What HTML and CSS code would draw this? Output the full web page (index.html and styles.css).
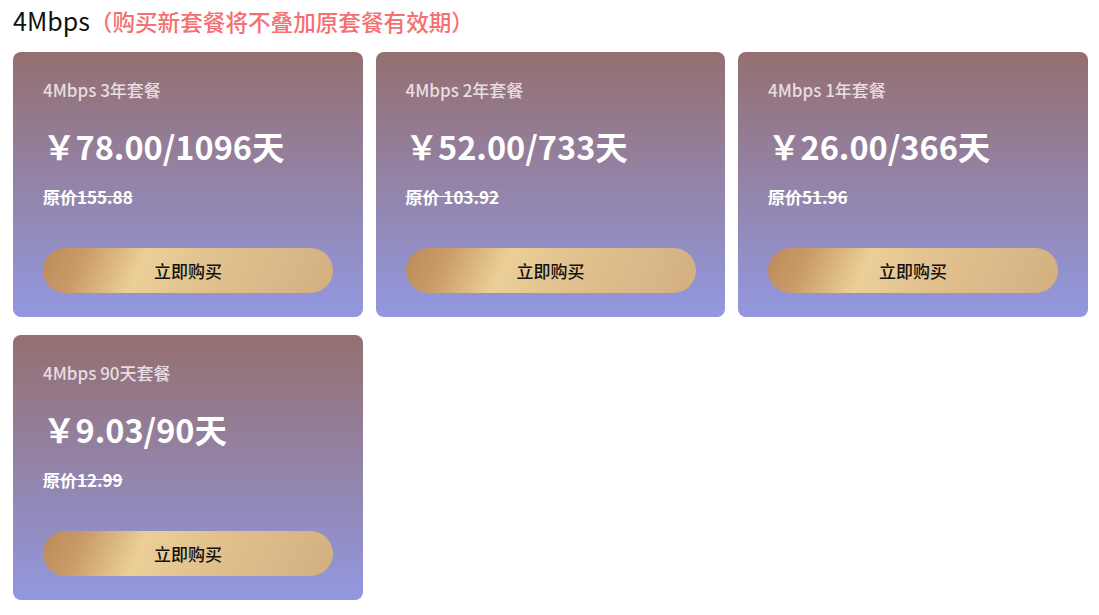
FILE: index.html
```html
<!DOCTYPE html>
<html lang="zh">
<head>
<meta charset="utf-8">
<link rel="stylesheet" href="styles.css">
</head>
<body>
<div class="page">
  <h2 class="title">4Mbps<span class="note">（购买新套餐将不叠加原套餐有效期）</span></h2>
  <div class="grid">
    <div class="card">
      <div class="name">4Mbps 3年套餐</div>
      <div class="price">￥78.00/1096天</div>
      <div class="orig">原价155.88</div>
      <button class="buy">立即购买</button>
    </div>
    <div class="card">
      <div class="name">4Mbps 2年套餐</div>
      <div class="price">￥52.00/733天</div>
      <div class="orig">原价 103.92</div>
      <button class="buy">立即购买</button>
    </div>
    <div class="card">
      <div class="name">4Mbps 1年套餐</div>
      <div class="price">￥26.00/366天</div>
      <div class="orig">原价51.96</div>
      <button class="buy">立即购买</button>
    </div>
    <div class="card">
      <div class="name">4Mbps 90天套餐</div>
      <div class="price">￥9.03/90天</div>
      <div class="orig">原价12.99</div>
      <button class="buy">立即购买</button>
    </div>
  </div>
</div>
</body>
</html>
```
FILE: styles.css
```css
* { box-sizing: border-box; }
html, body { margin: 0; padding: 0; background: #fff; }
body { font-family: "Noto Sans CJK SC", "Noto Sans", sans-serif; }
.page { padding: 5px 13px 0 13px; }
.title {
  margin: 0 0 17px 0;
  height: 30px;
  font-size: 25px;
  line-height: 30px;
  font-weight: 400;
  color: #111;
  white-space: nowrap;
}
.note {
  font-size: 22.6px;
  font-weight: 500;
  color: #f57072;
}
.grid {
  display: grid;
  grid-template-columns: repeat(3, 349.5px);
  column-gap: 13px;
  row-gap: 18px;
}
.card {
  height: 265px;
  border-radius: 8px;
  padding: 27px 30px 24px 30px;
  background: linear-gradient(180deg, #946f70 0%, #9298e0 100%);
  display: flex;
  flex-direction: column;
  align-items: flex-start;
}
.name {
  font-size: 17px;
  line-height: 22px;
  font-weight: 500;
  color: #eadde2;
}
.price {
  margin-top: 24px;
  font-size: 32.5px;
  line-height: 42px;
  font-weight: 700;
  color: #fff;
}
.orig {
  margin-top: 19px;
  font-size: 17px;
  line-height: 22px;
  font-weight: 700;
  color: #fff;
  text-decoration: line-through;
}
.buy {
  margin-top: 40px;
  flex-shrink: 0;
  width: 290px;
  height: 45px;
  border: none;
  border-radius: 23px;
  background: linear-gradient(115deg, #bd8a5b 0%, #c99b68 14%, #ebcf97 34%, #e2c28f 55%, #d3af80 100%);
  font-family: inherit;
  font-size: 17px;
  font-weight: 500;
  color: #111;
  cursor: pointer;
}
```
